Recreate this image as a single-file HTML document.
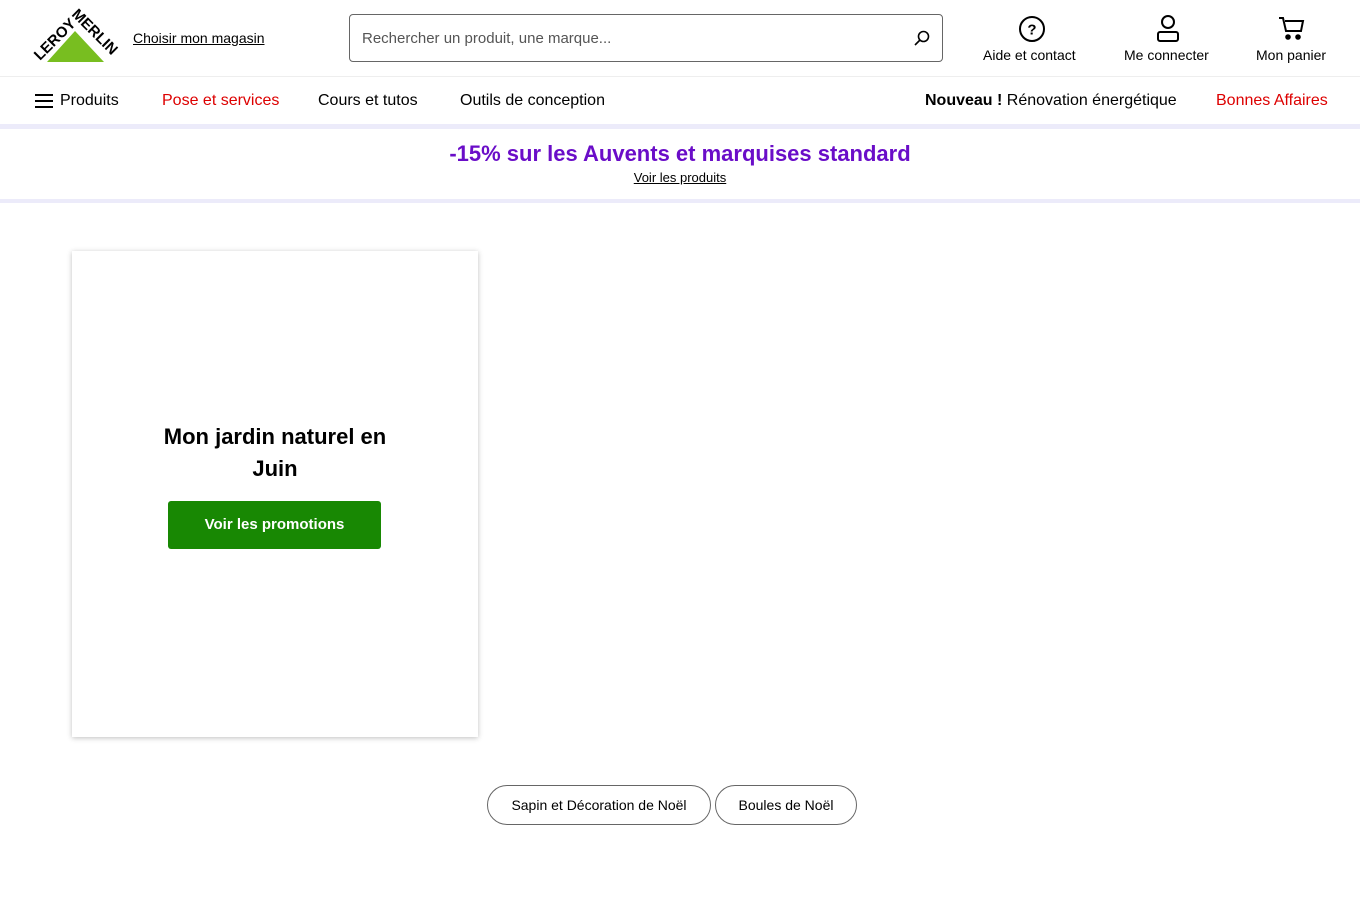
<!DOCTYPE html>
<html><head><meta charset="utf-8"><style>
*{margin:0;padding:0;box-sizing:border-box}
body{width:1360px;height:900px;background:#fff;font-family:"Liberation Sans",sans-serif;color:#000;position:relative;overflow:hidden}
.a{position:absolute}
a{color:#000}
</style></head><body>
<svg class="a" style="left:28px;top:8px" width="94" height="60" viewBox="0 0 94 60">
<polygon points="19,54 47,23 76,54" fill="#78be20"/>
<text x="0" y="0" font-family="Liberation Sans" font-weight="bold" font-size="15" transform="translate(12,53) rotate(-45)">LEROY</text>
<text x="0" y="0" font-family="Liberation Sans" font-weight="bold" font-size="15" transform="translate(43,7) rotate(45)">MERLIN</text>
</svg>
<a class="a" style="left:133px;top:30px;font-size:14px;text-decoration:underline">Choisir mon magasin</a>
<div class="a" style="left:349px;top:14px;width:594px;height:48px;border:1px solid #666;border-radius:4px"></div>
<div class="a" style="left:362px;top:30px;font-size:15px;color:#555">Rechercher un produit, une marque...</div>
<svg class="a" style="left:913px;top:29px" width="18" height="18" viewBox="0 0 18 18" fill="none" stroke="#000" stroke-width="1.6"><circle cx="10.5" cy="7.5" r="5"/><path d="M7 11L2 16"/></svg>
<svg class="a" style="left:1018px;top:15px" width="28" height="28" viewBox="0 0 28 28" fill="none" stroke="#000" stroke-width="2"><circle cx="14" cy="14" r="12"/><text x="14" y="19.5" text-anchor="middle" font-size="15" font-weight="bold" fill="#000" stroke="none" font-family="Liberation Sans">?</text></svg>
<div class="a" style="left:983px;top:47px;font-size:14px">Aide et contact</div>
<svg class="a" style="left:1155px;top:14px" width="26" height="28" viewBox="0 0 26 28" fill="none" stroke="#000" stroke-width="2"><circle cx="13" cy="8" r="6"/><rect x="3" y="18" width="20" height="9" rx="2"/></svg>
<div class="a" style="left:1124px;top:47px;font-size:14px">Me connecter</div>
<svg class="a" style="left:1278px;top:15px" width="28" height="28" viewBox="0 0 28 28" fill="none" stroke="#000" stroke-width="2"><path d="M1 3h4l3 13h15l2-10H7"/><circle cx="10" cy="22" r="1.8" fill="#000"/><circle cx="20" cy="22" r="1.8" fill="#000"/></svg>
<div class="a" style="left:1256px;top:47px;font-size:14px">Mon panier</div>
<div class="a" style="left:0;top:76px;width:1360px;height:1px;background:#eee"></div>
<svg class="a" style="left:35px;top:93px" width="18" height="16" viewBox="0 0 18 16" stroke="#000" stroke-width="2"><path d="M0 2h18M0 8h18M0 14h18"/></svg>
<div class="a" style="left:60px;top:92px;font-size:16px">Produits</div>
<div class="a" style="left:162px;top:92px;font-size:16px;color:#d00">Pose et services</div>
<div class="a" style="left:318px;top:92px;font-size:16px">Cours et tutos</div>
<div class="a" style="left:460px;top:92px;font-size:16px">Outils de conception</div>
<div class="a" style="left:925px;top:92px;font-size:16px"><b>Nouveau !</b> Rénovation énergétique</div>
<div class="a" style="left:1216px;top:92px;font-size:16px;color:#d00">Bonnes Affaires</div>
<div class="a" style="left:0;top:124px;width:1360px;height:5px;background:#ecebfa"></div>
<div class="a" style="left:0;top:141px;width:1360px;text-align:center;font-size:22px;font-weight:bold;color:#6a0dc8">-15% sur les Auvents et marquises standard</div>
<div class="a" style="left:0;top:170px;width:1360px;text-align:center;font-size:13px;text-decoration:underline">Voir les produits</div>
<div class="a" style="left:0;top:199px;width:1360px;height:4px;background:#ecebfa"></div>
<div class="a" style="left:72px;top:251px;width:406px;height:486px;background:#fff;box-shadow:0 1px 5px rgba(0,0,0,.25)"></div>
<div class="a" style="left:72px;top:421px;width:406px;text-align:center;font-size:22px;font-weight:bold;line-height:32px">Mon jardin naturel en<br>Juin</div>
<div class="a" style="left:168px;top:501px;width:213px;height:48px;background:#188803;border-radius:3px;color:#fff;font-weight:bold;font-size:15px;text-align:center;line-height:48px">Voir les promotions</div>
<div class="a" style="left:487px;top:785px;width:224px;height:40px;border:1px solid #666;border-radius:20px;text-align:center;line-height:38px;font-size:14px">Sapin et Décoration de Noël</div>
<div class="a" style="left:715px;top:785px;width:142px;height:40px;border:1px solid #666;border-radius:20px;text-align:center;line-height:38px;font-size:14px">Boules de Noël</div>
</body></html>
